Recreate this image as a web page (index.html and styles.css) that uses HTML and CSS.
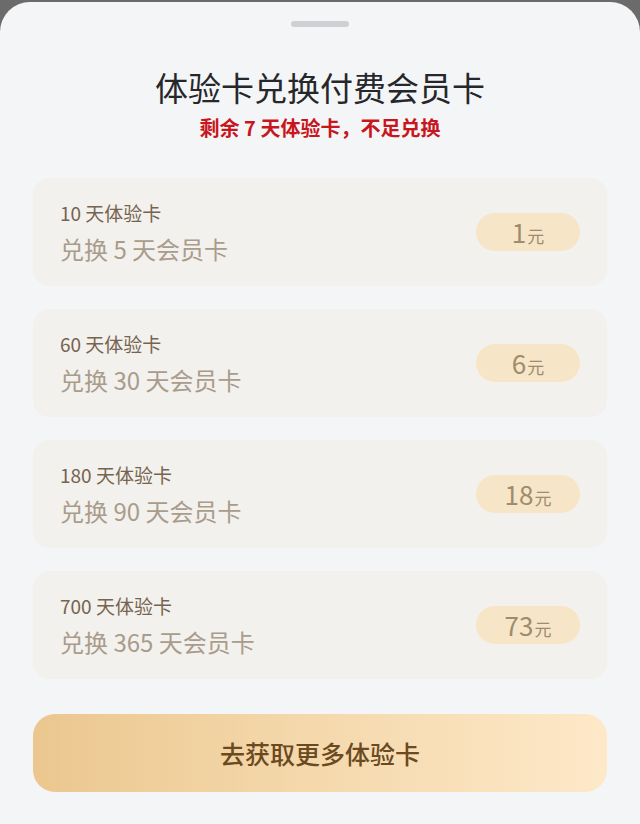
FILE: index.html
```html
<!DOCTYPE html>
<html lang="zh-CN">
<head>
<meta charset="utf-8">
<title>体验卡兑换付费会员卡</title>
<link rel="stylesheet" href="styles.css">
</head>
<body>
<div class="sheet">
  <div class="handle"></div>
  <h1 class="title">体验卡兑换付费会员卡</h1>
  <p class="subtitle">剩余 7 天体验卡，不足兑换</p>
  <div class="list">
    <div class="card">
      <div class="info">
        <div class="name">10 天体验卡</div>
        <div class="desc">兑换 5 天会员卡</div>
      </div>
      <div class="price"><span class="num">1</span><span class="unit">元</span></div>
    </div>
    <div class="card">
      <div class="info">
        <div class="name">60 天体验卡</div>
        <div class="desc">兑换 30 天会员卡</div>
      </div>
      <div class="price"><span class="num">6</span><span class="unit">元</span></div>
    </div>
    <div class="card">
      <div class="info">
        <div class="name">180 天体验卡</div>
        <div class="desc">兑换 90 天会员卡</div>
      </div>
      <div class="price"><span class="num">18</span><span class="unit">元</span></div>
    </div>
    <div class="card">
      <div class="info">
        <div class="name">700 天体验卡</div>
        <div class="desc">兑换 365 天会员卡</div>
      </div>
      <div class="price"><span class="num">73</span><span class="unit">元</span></div>
    </div>
  </div>
  <button class="cta">去获取更多体验卡</button>
</div>
</body>
</html>
```
FILE: styles.css
```css
html, body {
  margin: 0;
  padding: 0;
}
body {
  background: #6b6b6b;
  font-family: "Noto Sans CJK SC", "Noto Sans", sans-serif;
  height: 824px;
  overflow: hidden;
}
.sheet {
  margin-top: 2px;
  background: #f4f5f7;
  border-radius: 30px 30px 0 0;
  height: 822px;
  padding: 19px 33px 0;
  box-sizing: border-box;
  display: flex;
  flex-direction: column;
  align-items: stretch;
}
.handle {
  width: 58px;
  height: 6px;
  border-radius: 3px;
  background: #cfd0d3;
  align-self: center;
}
.title {
  margin: 40px 0 0;
  text-align: center;
  font-size: 33px;
  line-height: 40px;
  font-weight: 400;
  color: #26272a;
}
.subtitle {
  margin: 9px 0 0;
  text-align: center;
  font-size: 20px;
  line-height: 24px;
  font-weight: 700;
  color: #c8161d;
}
.list {
  margin-top: 38px;
  display: flex;
  flex-direction: column;
  gap: 23px;
}
.card {
  height: 108px;
  box-sizing: border-box;
  background: #f3f1ed;
  border-radius: 16px;
  padding: 0 27px;
  display: flex;
  align-items: center;
  justify-content: space-between;
}
.info {
  display: flex;
  flex-direction: column;
  padding-top: 1px;
}
.name {
  font-size: 19px;
  line-height: 26px;
  color: #75644f;
  font-weight: 400;
}
.desc {
  margin-top: 7px;
  font-size: 24px;
  line-height: 32px;
  color: #a99c8b;
  font-weight: 400;
}
.price {
  width: 104px;
  height: 38px;
  border-radius: 19px;
  background: #f6e5c7;
  display: flex;
  align-items: baseline;
  justify-content: center;
  line-height: 38px;
  color: #9f8b6d;
}
.num {
  font-size: 26px;
  font-weight: 400;
}
.unit {
  font-size: 17px;
  margin-left: 1px;
}
.cta {
  margin-top: 35px;
  height: 78px;
  border: none;
  border-radius: 22px;
  background: linear-gradient(90deg, #ebc78f 0%, #f5d9ad 50%, #fde8c8 100%);
  font-family: "Noto Sans CJK SC", "Noto Sans", sans-serif;
  font-size: 25px;
  font-weight: 500;
  color: #6b4a1f;
  padding: 0;
}
```
